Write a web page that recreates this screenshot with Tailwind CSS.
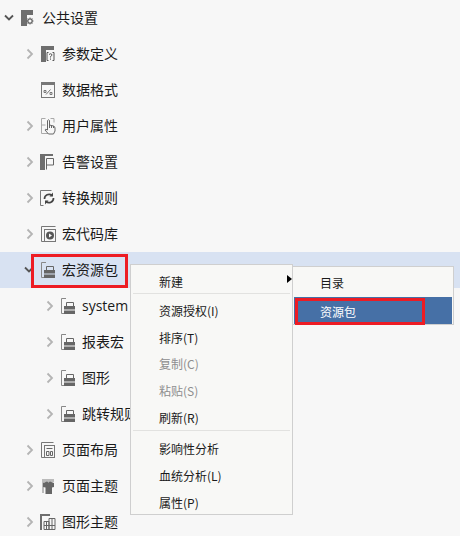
<!DOCTYPE html>
<html lang="zh-CN">
<head>
    <meta charset="UTF-8">
    <title>公共设置</title>
    <script src="https://cdn.jsdelivr.net/npm/@tailwindcss/browser@4"></script>
</head>
<body class="bg-[#f7f7f7] text-[#1a1a1a] font-['Noto_Sans_CJK_SC','Noto_Sans',sans-serif] text-[14px] w-[460px] h-[536px] overflow-hidden relative">
    <svg class="hidden">
        <symbol id="chev-right" viewBox="0 0 8 12"><path d="M1.5 1.5 6 6l-4.5 4.5" fill="none" stroke="#b4b4b4" stroke-width="1.8"/></symbol>
        <symbol id="chev-down" viewBox="0 0 10 8"><path d="M1 1.5 5 5.5 9 1.5" fill="none" stroke="#555" stroke-width="1.8"/></symbol>
        <symbol id="case" viewBox="0 0 16 18">
            <path d="M5 1.500H.5v15H5" fill="none" stroke="#888" stroke-width="1"/>
            <path d="M5.500 9V5.500h7V9" fill="none" stroke="#666" stroke-width="1"/>
            <path d="M3 9h11v3.500H3zM3 13.500h11V17H3z" fill="#666"/>
        </symbol>
    </svg>

    <ul>
        <li class="h-9 flex items-center">
            <svg class="w-[10px] h-2 ml-[4px] mr-[7px]"><use href="#chev-down"/></svg>
            <svg class="w-4 h-[18px]" viewBox="0 0 16 18"><path d="M0 1h12v5H6v11H0z" fill="#6e6e6e"/><circle cx="9" cy="12" r="2.2" fill="none" stroke="#666" stroke-width="1.3"/><path d="M9 8.500v1.200M9 14.300v1.200M5.500 12h1.200M11.300 12h1.200M6.600 9.600l.8.8M10.600 13.600l.8.8M11.400 9.600l-.8.8M7.400 13.600l-.8.8" stroke="#666"/></svg>
            <span class="ml-[5px] mb-[2px]">公共设置</span>
        </li>
        <li class="h-9 flex items-center pl-[26px]">
            <svg class="w-[8px] h-3 mr-[7px]"><use href="#chev-right"/></svg>
            <svg class="w-4 h-[18px]" viewBox="0 0 16 18"><path d="M0 1h13v4H5v12H0z" fill="#6e6e6e"/><path d="M7.500 7.500H6v8h1.500M11.500 7.500H13v8h-1.500M8 9.500q1.500-1.500 3 0 0 1.500-1.500 2v1M9.500 13.500v1.200" fill="none" stroke="#555"/></svg>
            <span class="ml-[5px] mb-[2px]">参数定义</span>
        </li>
        <li class="h-9 flex items-center pl-[41px]">
            <svg class="w-4 h-[18px]" viewBox="0 0 16 18"><rect x=".5" y="1.500" width="13" height="15" fill="none" stroke="#777"/><rect y="1" width="14" height="3" fill="#777"/><path d="M3 9.500h2v2H3zM9 11.500h2v2H9zM5 13.500 9.500 8.500" fill="none" stroke="#777"/></svg>
            <span class="ml-[5px] mb-[2px]">数据格式</span>
        </li>
        <li class="h-9 flex items-center pl-[26px]">
            <svg class="w-[8px] h-3 mr-[7px]"><use href="#chev-right"/></svg>
            <svg class="w-4 h-[18px]" viewBox="0 0 16 18"><path d="M4.500 1.500H.5v15h7M.5 8h4M9.500 1.500H13v4" fill="none" stroke="#aaa"/><path d="M6.500 13V3.500q1-1.500 2 0V8l4 1q1.500.5 1.500 2v3l-1.500 3h-5L4 13q0-1.500 2.500 0z" fill="#f7f7f7" stroke="#666"/><path d="M8.500 8v3M10.500 8.500V11M12.500 9v2" stroke="#666"/></svg>
            <span class="ml-[5px] mb-[2px]">用户属性</span>
        </li>
        <li class="h-9 flex items-center pl-[26px]">
            <svg class="w-[8px] h-3 mr-[6px]"><use href="#chev-right"/></svg>
            <svg class="w-4 h-[18px]" viewBox="0 0 16 18"><path d="M0 1h13v2H5v14H0z" fill="#6e6e6e"/><path d="M6.500 16.500V5.500H13.500V12H6.500" fill="none" stroke="#666"/></svg>
            <span class="ml-[6px] mb-[2px]">告警设置</span>
        </li>
        <li class="h-9 flex items-center pl-[26px]">
            <svg class="w-[8px] h-3 mr-[6px]"><use href="#chev-right"/></svg>
            <svg class="w-4 h-[18px]" viewBox="0 0 16 18"><path d="M3.500 16.500H.5v-15h11" fill="none" stroke="#777"/><path d="M4.500 10a4.500 4.500 0 0 1 7.500-3.500M13.500 9a4.500 4.500 0 0 1-7.500 3.500" fill="none" stroke="#444" stroke-width="1.700"/><path d="M13 3.500V7.500H9.500zM5 15.500V11.500H8.500z" fill="#444"/></svg>
            <span class="ml-[6px] mb-[2px]">转换规则</span>
        </li>
        <li class="h-9 flex items-center pl-[26px]">
            <svg class="w-[8px] h-3 mr-[7px]"><use href="#chev-right"/></svg>
            <svg class="w-4 h-[18px]" viewBox="0 0 16 18"><path d="M3.500 16.500H.5v-15h14" fill="none" stroke="#777"/><rect x="3.500" y="4.500" width="11" height="12" fill="none" stroke="#777"/><circle cx="9" cy="10.500" r="4" fill="#555"/><path d="M8 8.500v4l3-2z" fill="#f7f7f7"/></svg>
            <span class="ml-[5px] mb-[2px]">宏代码库</span>
        </li>
        <li class="h-9 flex items-center pl-[24px] bg-[#d8e2f2]">
            <svg class="w-[10px] h-2 mr-[7px]"><use href="#chev-down"/></svg>
            <svg class="w-4 h-[18px]"><use href="#case"/></svg>
            <span class="ml-[5px] mb-[2px]">宏资源包</span>
        </li>
        <li class="h-9 flex items-center pl-[46px]">
            <svg class="w-[8px] h-3 mr-[7px]"><use href="#chev-right"/></svg>
            <svg class="w-4 h-[18px]"><use href="#case"/></svg>
            <span class="ml-[5px] mb-[2px] font-['Open_Sans',sans-serif]">system</span>
        </li>
        <li class="h-9 flex items-center pl-[46px]">
            <svg class="w-[8px] h-3 mr-[7px]"><use href="#chev-right"/></svg>
            <svg class="w-4 h-[18px]"><use href="#case"/></svg>
            <span class="ml-[5px] mb-[2px]">报表宏</span>
        </li>
        <li class="h-9 flex items-center pl-[46px]">
            <svg class="w-[8px] h-3 mr-[7px]"><use href="#chev-right"/></svg>
            <svg class="w-4 h-[18px]"><use href="#case"/></svg>
            <span class="ml-[5px] mb-[2px]">图形</span>
        </li>
        <li class="h-9 flex items-center pl-[46px]">
            <svg class="w-[8px] h-3 mr-[7px]"><use href="#chev-right"/></svg>
            <svg class="w-4 h-[18px]"><use href="#case"/></svg>
            <span class="ml-[5px] mb-[2px]">跳转规则</span>
        </li>
        <li class="h-9 flex items-center pl-[26px]">
            <svg class="w-[8px] h-3 mr-[7px]"><use href="#chev-right"/></svg>
            <svg class="w-4 h-[18px]" viewBox="0 0 16 18"><path d="M3.500 16.500H.5v-15h12" fill="none" stroke="#777"/><rect x="3.500" y="4.500" width="10" height="12" fill="none" stroke="#777"/><path d="M5.500 7.500h6M5.500 10.500h2.500v4h-2.500zM9.500 10.500h2v4h-2z" fill="none" stroke="#666"/></svg>
            <span class="ml-[5px] mb-[2px]">页面布局</span>
        </li>
        <li class="h-9 flex items-center pl-[26px]">
            <svg class="w-[8px] h-3 mr-[7px]"><use href="#chev-right"/></svg>
            <svg class="w-4 h-[18px]" viewBox="0 0 16 18"><path d="M1 2h12v3H1zM1 5h2v11H1z" fill="#bbb"/><path d="M2 6l4-1.500 1.500 1 1.500-1L13 6v4l-2 .5V17H4.500v-6.500L2 10z" fill="#666"/></svg>
            <span class="ml-[5px] mb-[2px]">页面主题</span>
        </li>
        <li class="h-9 flex items-center pl-[26px]">
            <svg class="w-[8px] h-3 mr-[6px]"><use href="#chev-right"/></svg>
            <svg class="w-4 h-[18px]" viewBox="0 0 16 18"><path d="M0 1h10v2H2v14H0z" fill="#6e6e6e"/><path d="M4 8.500h5v8H4zM9 5.500h6v11H9zM4 12.500h11M12 5.500v11M6.500 8.500v8" fill="none" stroke="#666"/></svg>
            <span class="ml-[6px] mb-[2px]">图形主题</span>
        </li>
    </ul>

    <div class="absolute left-[31px] top-[254px] w-[97px] h-[34px] border-[3px] border-[#ed1c24]"></div>

    <div class="absolute left-[130px] top-[264px] w-[163px] h-[251px] bg-[#f8f8f6] border border-[#cfcfcf] text-[12px] pt-[5px] px-[2px]">
        <div class="h-[23px] pl-[26px] flex items-center">新建</div>
        <div class="h-px bg-[#e2e2e0] mb-[3.5px]"></div>
        <div class="h-[26.8px] pl-[26px] flex items-center">资源授权(I)</div>
        <div class="h-[26.8px] pl-[26px] flex items-center">排序(T)</div>
        <div class="h-[26.8px] pl-[26px] flex items-center text-[#8e8e8e]">复制(C)</div>
        <div class="h-[26.8px] pl-[26px] flex items-center text-[#8e8e8e]">粘贴(S)</div>
        <div class="h-[26.8px] pl-[26px] flex items-center">刷新(R)</div>
        <div class="h-px bg-[#e2e2e0] -mt-[1.5px] mb-[5px]"></div>
        <div class="h-[26.8px] pl-[26px] flex items-center">影响性分析</div>
        <div class="h-[26.8px] pl-[26px] flex items-center">血统分析(L)</div>
        <div class="h-[26.8px] pl-[26px] flex items-center">属性(P)</div>
        <div class="absolute left-[156px] top-[10px] w-0 h-0 border-y-[4px] border-y-transparent border-l-[5px] border-l-black"></div>
    </div>

    <div class="absolute left-[292px] top-[266px] w-[162px] h-[59px] bg-[#f8f8f6] border border-[#cfcfcf] text-[12px] p-px">
        <div class="h-[29px] pl-[26px] pt-px flex items-center">目录</div>
        <div class="h-[27px] pl-[26px] pt-[3px] flex items-center bg-[#4670a6] text-white">资源包</div>
    </div>
    <div class="absolute left-[295px] top-[298px] w-[130px] h-[27px] border-[3px] border-[#ed1c24]"></div>
</body>
</html>
